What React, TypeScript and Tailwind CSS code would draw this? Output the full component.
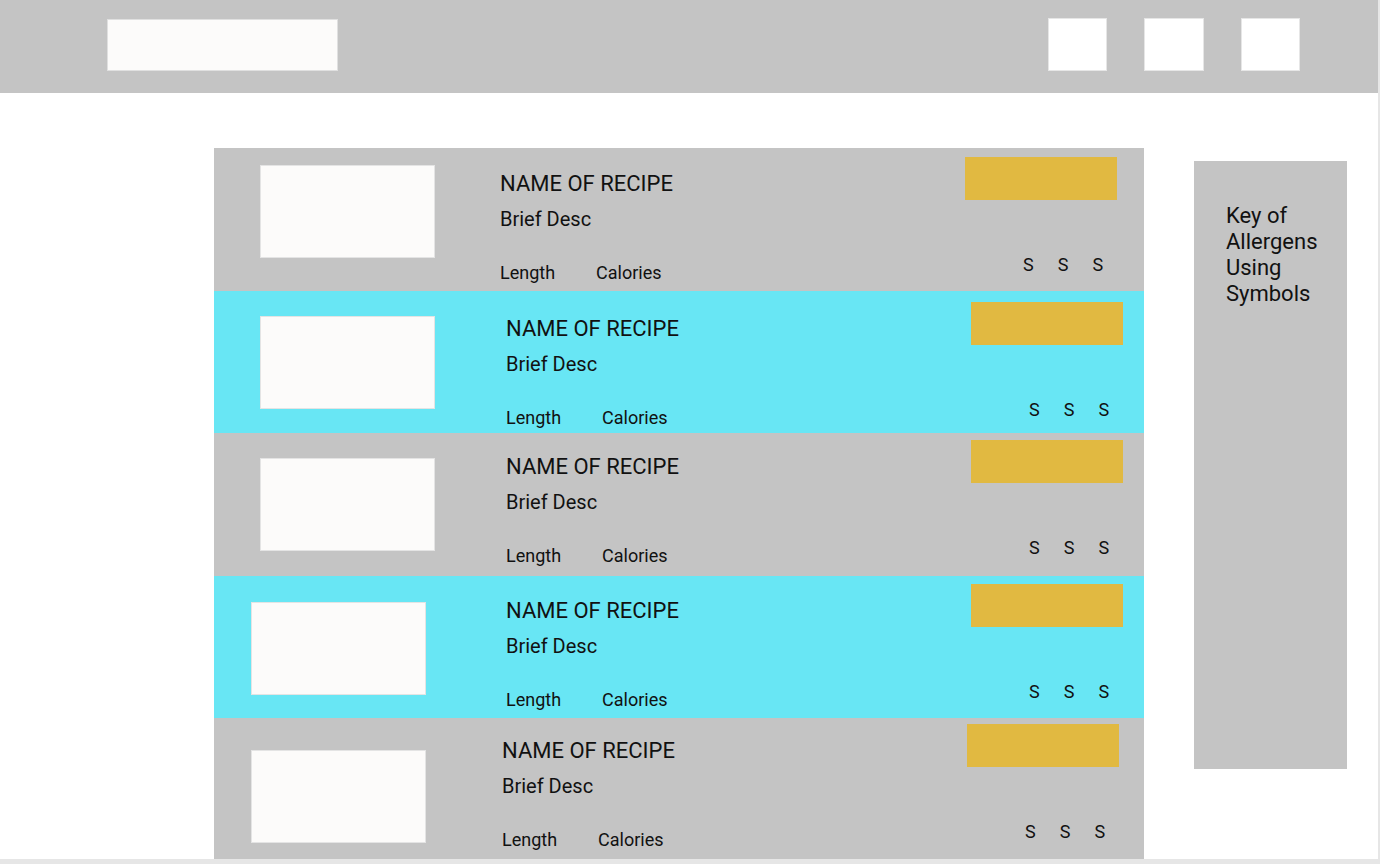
const rows = [
  {
    bg: 'bg-[#c4c4c4]',
    img: 'ml-[46px] mt-[17px]',
    text: 'ml-[65px] mt-[23px]',
    right: 'mr-[27px] mt-[9px]',
    sTop: 'mt-[54px]',
  },
  {
    bg: 'bg-[#68e6f4]',
    img: 'ml-[46px] mt-[25px]',
    text: 'ml-[71px] mt-[25px]',
    right: 'mr-[21px] mt-[11px]',
    sTop: 'mt-[54px]',
  },
  {
    bg: 'bg-[#c4c4c4]',
    img: 'ml-[46px] mt-[25px]',
    text: 'ml-[71px] mt-[21px]',
    right: 'mr-[21px] mt-[7px]',
    sTop: 'mt-[54px]',
  },
  {
    bg: 'bg-[#68e6f4]',
    img: 'ml-[37px] mt-[26px]',
    text: 'ml-[80px] mt-[22px]',
    right: 'mr-[21px] mt-[8px]',
    sTop: 'mt-[54px]',
  },
  {
    bg: 'bg-[#c4c4c4]',
    img: 'ml-[37px] mt-[32px]',
    text: 'ml-[76px] mt-[20px]',
    right: 'mr-[25px] mt-[6px]',
    sTop: 'mt-[54px]',
  },
]

function RecipeRow({ bg, img, text, right, sTop }: (typeof rows)[number]) {
  return (
    <div className={`flex h-[142.5px] items-start ${bg}`}>
      <div className={`h-[93px] w-[175px] shrink-0 border border-[#e4e4e4] bg-[#fcfbfa] ${img}`} />
      <div className={`flex flex-1 flex-col ${text}`}>
        <div className="text-[22px] leading-[26px]">NAME OF RECIPE</div>
        <div className="mt-[10px] text-[20px] leading-[24px]">Brief Desc</div>
        <div className="mt-[31px] flex gap-[41px] text-[18px] leading-[22px]">
          <span>Length</span>
          <span>Calories</span>
        </div>
      </div>
      <div className={`flex w-[152px] shrink-0 flex-col ${right}`}>
        <div className="h-[43px] w-[152px] bg-[#e1b941]" />
        <div className={`ml-[58px] flex gap-[24px] text-[18px] leading-[22px] ${sTop}`}>
          <span>S</span>
          <span>S</span>
          <span>S</span>
        </div>
      </div>
    </div>
  )
}

export default function App() {
  return (
    <div className="h-[864px] w-[1380px] overflow-hidden bg-[#e6e6e6] font-['Roboto',sans-serif] text-[#111]">
      <div className="h-[859px] w-[1378px] overflow-hidden bg-white">
        <header className="flex h-[93px] items-start bg-[#c4c4c4]">
          <div className="ml-[107px] mt-[19px] h-[52px] w-[231px] border border-[#e0e0e0] bg-[#fcfbfa]" />
          <div className="ml-auto mr-[78px] mt-[18px] flex gap-[37px]">
            <div className="h-[53px] w-[59px] border border-[#e6e6e6] bg-white" />
            <div className="h-[53px] w-[60px] border border-[#e6e6e6] bg-white" />
            <div className="h-[53px] w-[59px] border border-[#e6e6e6] bg-white" />
          </div>
        </header>

        <main className="ml-[214px] mt-[55px] flex items-start gap-[50px]">
          <div className="w-[930px] shrink-0">
            {rows.map((r, i) => (
              <RecipeRow key={i} {...r} />
            ))}
          </div>
          <aside className="mt-[13px] h-[608px] w-[153px] bg-[#c4c4c4] pl-[32px] pr-[10px] pt-[42px] text-[22px] leading-[26px]">
            Key of Allergens Using Symbols
          </aside>
        </main>
      </div>
    </div>
  )
}
